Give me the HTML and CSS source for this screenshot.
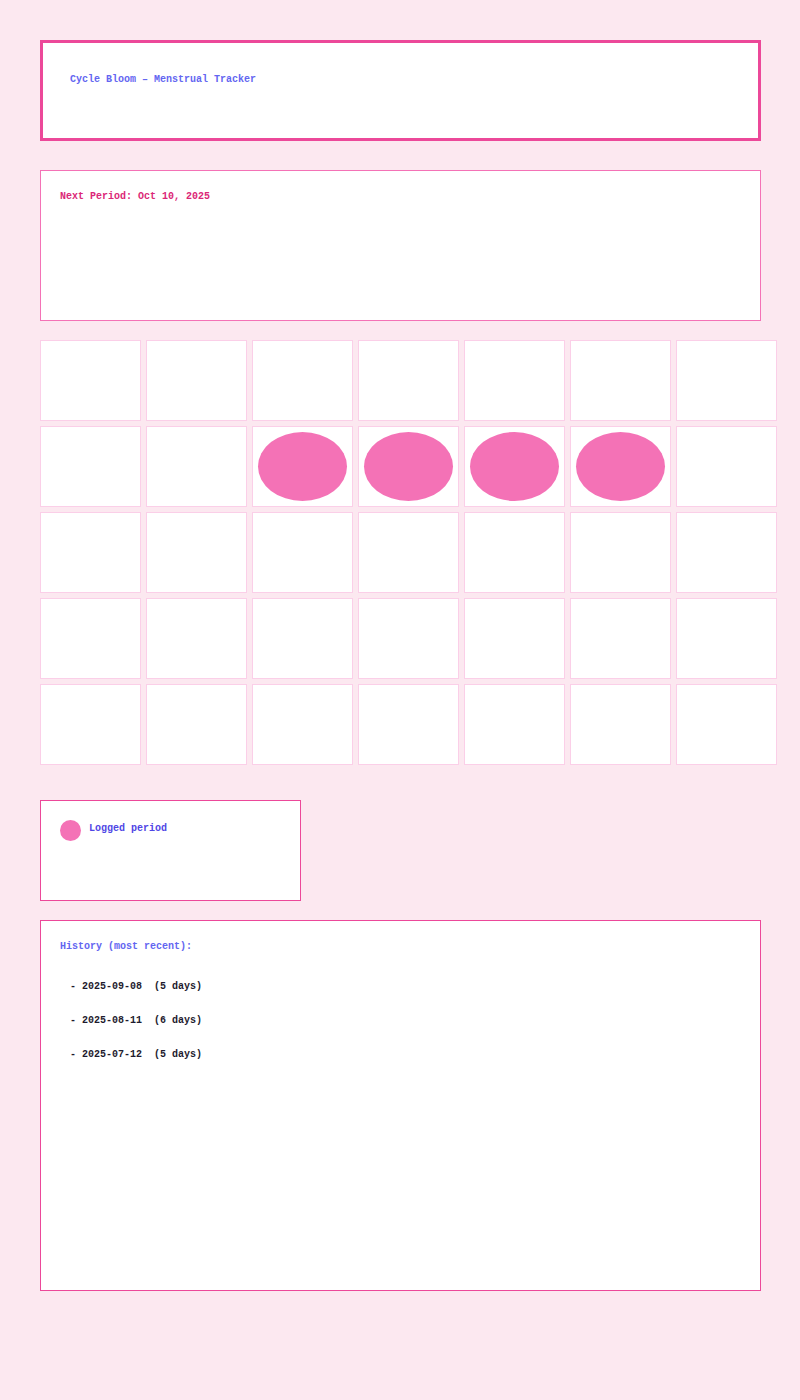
FILE: index.html
```html
<!DOCTYPE html>
<html lang="en">
<head>
<meta charset="utf-8">
<title>Cycle Bloom</title>
<link rel="stylesheet" href="styles.css">
</head>
<body>
<main class="app">
  <header class="header">
    <h1 class="title">Cycle Bloom – Menstrual Tracker</h1>
  </header>

  <section class="next">
    <p class="next-text">Next Period: Oct 10, 2025</p>
  </section>

  <section class="calendar">
    <div class="cell"></div><div class="cell"></div><div class="cell"></div><div class="cell"></div><div class="cell"></div><div class="cell"></div><div class="cell"></div>
    <div class="cell"></div><div class="cell"></div>
    <div class="cell"><span class="dot"></span></div>
    <div class="cell"><span class="dot"></span></div>
    <div class="cell"><span class="dot"></span></div>
    <div class="cell"><span class="dot"></span></div>
    <div class="cell"></div>
    <div class="cell"></div><div class="cell"></div><div class="cell"></div><div class="cell"></div><div class="cell"></div><div class="cell"></div><div class="cell"></div>
    <div class="cell"></div><div class="cell"></div><div class="cell"></div><div class="cell"></div><div class="cell"></div><div class="cell"></div><div class="cell"></div>
    <div class="cell"></div><div class="cell"></div><div class="cell"></div><div class="cell"></div><div class="cell"></div><div class="cell"></div><div class="cell"></div>
  </section>

  <section class="legend">
    <div class="legend-item">
      <span class="legend-dot"></span>
      <span class="legend-label">Logged period</span>
    </div>
  </section>

  <section class="history">
    <h2 class="history-title">History (most recent):</h2>
    <ul class="history-list">
      <li class="history-item">- 2025-09-08  (5 days)</li>
      <li class="history-item">- 2025-08-11  (6 days)</li>
      <li class="history-item">- 2025-07-12  (5 days)</li>
    </ul>
  </section>
</main>
</body>
</html>
```

FILE: styles.css
```css
* {
  box-sizing: border-box;
}

html, body {
  margin: 0;
  padding: 0;
}

body {
  background: #fce8f0;
  font-family: "Liberation Mono", "Courier New", monospace;
  font-size: 10px;
  font-weight: bold;
  line-height: 12px;
}

.app {
  display: flex;
  flex-direction: column;
  align-items: flex-start;
  padding: 40px;
}

.header {
  width: 721px;
  height: 101px;
  background: #fff;
  border: 3px solid #ec4899;
  padding: 31px 27px;
}

.title {
  margin: 0;
  font-size: 10px;
  line-height: 12px;
  color: #6366f1;
}

.next {
  margin-top: 29px;
  width: 721px;
  height: 151px;
  background: #fff;
  border: 1px solid #f472b6;
  padding: 20px 19px;
}

.next-text {
  margin: 0;
  color: #db2777;
}

.calendar {
  margin-top: 19px;
  display: grid;
  grid-template-columns: repeat(7, 101px);
  grid-auto-rows: 81px;
  gap: 5px;
}

.cell {
  background: #fff;
  border: 1px solid #fbcfe8;
  padding: 5px;
  display: flex;
}

.dot {
  flex: 1;
  border-radius: 50%;
  background: #f472b6;
}

.legend {
  margin-top: 35px;
  width: 261px;
  height: 101px;
  background: #fff;
  border: 1px solid #ec4899;
  padding: 19px;
}

.legend-item {
  display: flex;
  align-items: center;
  gap: 8px;
}

.legend-dot {
  width: 21px;
  height: 21px;
  border-radius: 50%;
  background: #f472b6;
}

.legend-label {
  color: #4f46e5;
  margin-top: -3px;
}

.history {
  margin-top: 19px;
  width: 721px;
  height: 371px;
  background: #fff;
  border: 1px solid #ec4899;
  padding: 20px 19px;
}

.history-title {
  margin: 0;
  font-size: 10px;
  line-height: 12px;
  color: #6366f1;
}

.history-list {
  list-style: none;
  margin: 28px 0 0;
  padding: 0 0 0 10px;
}

.history-item {
  white-space: pre;
  color: #1e1b2e;
  height: 34px;
}
```
